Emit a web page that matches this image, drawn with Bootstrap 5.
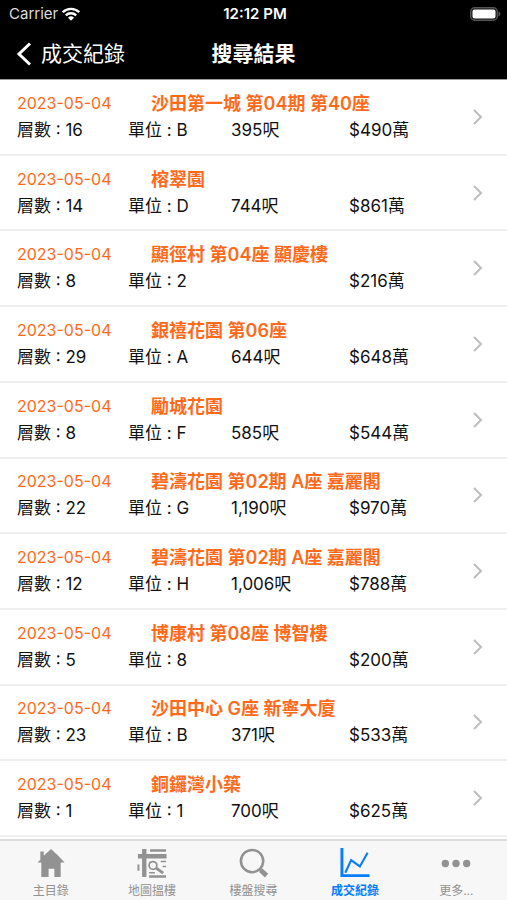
<!DOCTYPE html>
<html lang="zh-Hant">
<head>
<meta charset="utf-8">
<meta name="viewport" content="width=device-width, initial-scale=1">
<title>搜尋結果</title>
<link href="https://cdn.jsdelivr.net/npm/bootstrap@5.3.0/dist/css/bootstrap.min.css" rel="stylesheet">
<style>
body { font-family: Inter, "Noto Sans CJK TC", sans-serif; background: #fff; color: #111; }
.status-bar { height: 28px; font-size: 15px; line-height: 20px; padding: 0 6px 0 9px; display: grid; grid-template-columns: 1fr auto 1fr; }
.status-bar .network { color: #ddd; }
.title-bar { height: 52px; padding: 0 16px; display: grid; grid-template-columns: 1fr auto 1fr; border-bottom: 1px solid #999; }
.title-bar a { font-size: 21px; }
.title-bar h1 { font-size: 21px; line-height: 28px; }
.results { padding-bottom: 2px; }
.results li { border-bottom: 2px solid #efeff0; }
.results a { color: #111; padding: 0 24px 0 17px; }
.deal { line-height: 27px; }
.deal-head { display: grid; grid-template-columns: 134fr 321fr; color: #ff6a1a; }
.deal-head time { font-size: 16px; }
.deal-head strong { font-size: 18px; font-weight: 600; }
.deal-info { display: grid; grid-template-columns: 111fr 103fr 118fr 123fr; font-size: 17px; }
.tab-bar { height: 61px; background: #f7f7f7; border-top: 2px solid #dcdcdc; }
.tab-bar a { flex: 1 1 0; color: #929292; font-size: 12px; line-height: 18px; padding-top: 7px; gap: 3px; }
.tab-bar a.active { color: #087cff; font-weight: 700; }
</style>
<script src="https://cdn.jsdelivr.net/npm/bootstrap@5.3.0/dist/js/bootstrap.bundle.min.js"></script>
</head>
<body class="d-flex flex-column min-vh-100">
<header class="bg-black text-white">
  <div class="status-bar align-items-center">
    <span class="network d-flex align-items-center gap-1">Carrier
      <svg width="18" height="14" viewBox="0 0 18 14" fill="none" stroke="#fff" stroke-width="2.4" aria-hidden="true"><path d="M.8 5.2a11.7 11.7 0 0 1 16.4 0M3.8 8.4a7.5 7.5 0 0 1 10.4 0"/><path d="M9 13.8 6 10.8a4.3 4.3 0 0 1 6 0z" fill="#fff" stroke="none"/></svg>
    </span>
    <span class="fw-semibold">12:12 PM</span>
    <svg class="ms-auto" width="31" height="14" viewBox="0 0 31 14" aria-hidden="true"><rect x=".7" y=".7" width="26.6" height="12.6" rx="4" fill="#111" stroke="#555" stroke-width="1.4"/><rect x="2.5" y="2.5" width="23" height="9" rx="2" fill="#fff"/><path d="M28.5 4.500q2 .6 2 2.500t-2 2.500z" fill="#555"/></svg>
  </div>
  <div class="title-bar align-items-center">
    <a href="#" class="d-flex align-items-center text-white text-decoration-none">
      <svg class="me-2" width="17" height="24" viewBox="0 0 17 24" fill="none" stroke="#fff" stroke-width="3" aria-hidden="true"><path d="M14 1.500 3 12l11 10.500"/></svg>成交紀錄</a>
    <h1 class="fw-bold mb-0">搜尋結果</h1>
  </div>
</header>
<main class="d-flex flex-column flex-fill">
<ul class="results list-unstyled d-flex flex-column flex-fill mb-0" id="results"></ul>
</main>
<nav class="tab-bar d-flex sticky-bottom" aria-label="主選單">
  <a href="#" class="d-flex flex-column align-items-center text-decoration-none">
    <svg width="30" height="32" viewBox="0 0 30 32" fill="currentColor" aria-hidden="true"><path d="M15 1 22.500 8l6.500 7H25v15h-6.500v-8.500h-6V30H5V15H1l3-3V3.500h3.500V8z"/></svg>主目錄</a>
  <a href="#" class="d-flex flex-column align-items-center text-decoration-none">
    <svg width="30" height="32" viewBox="0 0 30 32" fill="none" stroke="currentColor" aria-hidden="true"><path d="M7 1v29M.5 8.500H30" stroke-width="4.500"/><path d="M13 2.500h16.500M12 29.500h17.500" stroke-width="2.500"/><path d="M1 17v6.500" stroke-width="2"/><path d="M12 15h3M24 14h5.500M26 19h3.500M12 25.500h6" stroke-width="1.500"/><circle cx="16" cy="18" r="4" fill="#f7f7f7" stroke-width="1.800"/><path d="m19 20.500 7.500 5.500" stroke-width="3"/></svg>地圖搵樓</a>
  <a href="#" class="d-flex flex-column align-items-center text-decoration-none">
    <svg width="30" height="32" viewBox="0 0 30 32" fill="none" stroke="currentColor" aria-hidden="true"><circle cx="13" cy="13.500" r="11.500" stroke-width="2.600"/><path d="m20.500 21.500 2 2" stroke-width="3"/><path d="m22 23 6 5.500" stroke-width="5"/></svg>樓盤搜尋</a>
  <a href="#" class="active d-flex flex-column align-items-center text-decoration-none" aria-current="page">
    <svg width="30" height="32" viewBox="0 0 30 32" fill="none" stroke="currentColor" aria-hidden="true"><path d="M1.500 0v28.500H30" stroke-width="3"/><path d="m5 25.500 6-13L20 19l8-14" stroke-width="2.200"/></svg>成交紀錄</a>
  <a href="#" class="d-flex flex-column align-items-center text-decoration-none">
    <svg width="30" height="32" viewBox="0 0 30 32" fill="currentColor" aria-hidden="true"><circle cx="4" cy="16" r="3.800"/><circle cx="15" cy="16" r="3.800"/><circle cx="26" cy="16" r="3.800"/></svg>更多...</a>
</nav>
<script>
const deals = [
  ["沙田第一城 第04期 第40座", "16", "B", "395呎", "$490萬"],
  ["榕翠園", "14", "D", "744呎", "$861萬"],
  ["顯徑村 第04座 顯慶樓", "8", "2", "", "$216萬"],
  ["銀禧花園 第06座", "29", "A", "644呎", "$648萬"],
  ["勵城花園", "8", "F", "585呎", "$544萬"],
  ["碧濤花園 第02期 A座 嘉麗閣", "22", "G", "1,190呎", "$970萬"],
  ["碧濤花園 第02期 A座 嘉麗閣", "12", "H", "1,006呎", "$788萬"],
  ["博康村 第08座 博智樓", "5", "8", "", "$200萬"],
  ["沙田中心 G座 新寧大廈", "23", "B", "371呎", "$533萬"],
  ["銅鑼灣小築", "1", "1", "700呎", "$625萬"]
];
document.getElementById("results").innerHTML = deals.map(([name, floor, unit, area, price]) => `
<li class="d-flex flex-fill">
  <a href="#" class="d-flex flex-fill align-items-center text-decoration-none">
    <div class="deal flex-fill">
      <div class="deal-head"><time datetime="2023-05-04">2023-05-04</time><strong>${name}</strong></div>
      <div class="deal-info"><span>層數 : ${floor}</span><span>單位 : ${unit}</span><span>${area}</span><span>${price}</span></div>
    </div>
    <svg width="11" height="16" viewBox="0 0 11 16" fill="none" stroke="#bdbdc0" stroke-width="2" aria-hidden="true"><path d="m2 1 7 7-7 7"/></svg>
  </a>
</li>`).join("");
</script>
</body>
</html>
